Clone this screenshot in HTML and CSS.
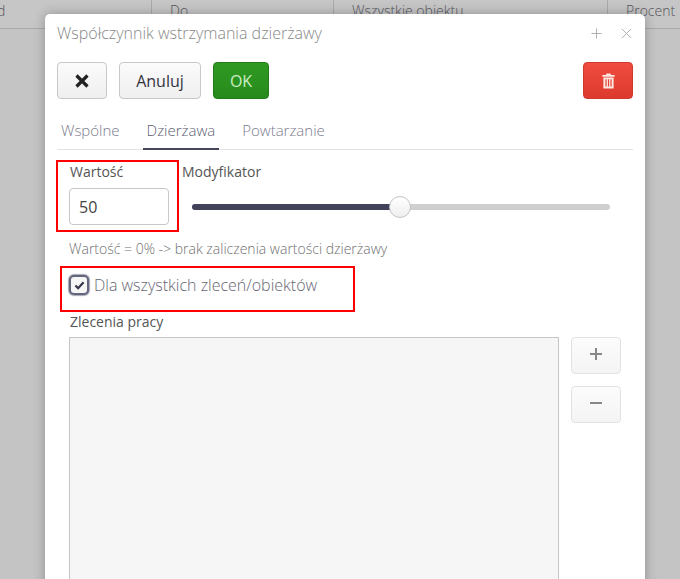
FILE: index.html
```html
<!DOCTYPE html>
<html lang="pl">
<head>
<meta charset="utf-8">
<title>Współczynnik wstrzymania dzierżawy</title>
<link rel="stylesheet" href="styles.css">
</head>
<body>
<div class="table-head">
  <div class="col col-a"><span>d</span></div>
  <div class="col col-b">Do</div>
  <div class="col col-c">Wszystkie obiektu</div>
  <div class="col col-d">Procent</div>
</div>
<section class="modal">
  <header class="modal-head">
    <h1 class="modal-title">Współczynnik wstrzymania dzierżawy</h1>
    <div class="win-icons">
      <svg class="win-icon" viewBox="0 0 12 12"><path d="M6 .5v11M.5 6h11"/></svg>
      <svg class="win-icon" viewBox="0 0 12 12"><path d="M1 1l10 10M11 1L1 11"/></svg>
    </div>
  </header>
  <div class="toolbar">
    <button class="btn btn-icon"><svg class="x-icon" viewBox="0 0 16 16"><path d="M2.5 2.5l11 11M13.5 2.5l-11 11"/></svg></button>
    <button class="btn btn-cancel">Anuluj</button>
    <button class="btn btn-ok">OK</button>
    <button class="btn btn-del">
      <svg class="trash" viewBox="0 0 14 16"><path d="M5 0h4l1 1.6h3.6v1.7H.4V1.600H4zM1.500 4.200h11V16h-11zM3.700 6v8h1.300V6zM6.400 6v8h1.300V6zM9.100 6v8h1.300V6z" fill-rule="evenodd"/></svg>
    </button>
  </div>
  <nav class="tabs">
    <a class="tab">Wspólne</a>
    <a class="tab tab-active">Dzierżawa</a>
    <a class="tab">Powtarzanie</a>
  </nav>
  <div class="value-row">
    <div class="value-col">
      <label class="field-label">Wartość</label>
      <input class="value-input" value="50">
    </div>
    <div class="mod-col">
      <label class="field-label mod-label">Modyfikator</label>
      <div class="slider"><div class="slider-fill"></div><div class="slider-thumb"></div></div>
    </div>
  </div>
  <p class="hint">Wartość = 0% -&gt; brak zaliczenia wartości dzierżawy</p>
  <div class="check-row">
    <span class="checkbox"><svg viewBox="0 0 12 10"><path d="M1.500 5l3 3 6-6.500"/></svg></span>
    <span class="check-label">Dla wszystkich zleceń/obiektów</span>
  </div>
  <label class="field-label orders-label">Zlecenia pracy</label>
  <div class="orders">
    <div class="list"></div>
    <div class="list-btns">
      <button class="btn btn-side"><svg viewBox="0 0 12 12"><path d="M6 0v12M0 6h12"/></svg></button>
      <button class="btn btn-side"><svg viewBox="0 0 12 12"><path d="M0 6h12"/></svg></button>
    </div>
  </div>
  <div class="mark mark-value"></div>
  <div class="mark mark-check"></div>
</section>
</body>
</html>
```
FILE: styles.css
```css
* { box-sizing: border-box; }
html, body { height: 100%; }
body {
  margin: 0;
  overflow: hidden;
  background: #c4c4c4;
  font-family: "Open Sans", sans-serif;
  color: #555;
  position: relative;
}
.table-head {
  display: flex;
  height: 29px;
  border-bottom: 1px solid #aaa;
  background: #c6c6c6;
  color: #55555e;
  font-size: 14px;
  font-weight: 300;
  line-height: 21px;
}
.col { border-right: 1px solid #aaa; padding-left: 18px; }
.col-a { width: 152px; padding: 0; }
.col-a span { display: block; margin-left: -3px; }
.col-b { width: 182px; }
.col-c { width: 274px; }
.col-d { flex: 1; border: 0; }
.modal {
  position: absolute;
  left: 45px;
  top: 14px;
  width: 600px;
  height: 700px;
  background: #fff;
  border-radius: 5px 5px 0 0;
  box-shadow: 0 0 12px rgba(0,0,0,.28);
  padding: 0 12px;
}
.modal-head {
  display: flex;
  justify-content: space-between;
  align-items: center;
  height: 38px;
}
.modal-title {
  margin: 0;
  font-size: 16px;
  font-weight: 300;
  color: #888;
  line-height: 38px;
}
.win-icons { display: flex; gap: 19px; padding-right: 1px; }
.win-icon { width: 11px; height: 11px; fill: none; stroke: #aaa; stroke-width: 1; }
.toolbar { display: flex; gap: 12px; height: 38px; margin-top: 10px; }
.btn {
  font-family: inherit;
  font-size: 16px;
  height: 37px;
  padding: 0;
  border: 1px solid #c8c8c8;
  border-radius: 4px;
  background: linear-gradient(#fbfbfb, #efefef);
  color: #33333e;
  display: flex;
  align-items: center;
  justify-content: center;
}
.btn-icon { width: 50px; }
.x-icon { width: 16px; height: 16px; fill: none; stroke: #222; stroke-width: 3.200; }
.btn-cancel { width: 82px; }
.btn-ok {
  width: 56px;
  background: linear-gradient(#2f9a22, #278a1c);
  border-color: #237a18;
  color: #cdeec4;
}
.btn-del {
  width: 50px;
  margin-left: auto;
  background: linear-gradient(#f04c40, #dd3a2e);
  border-color: #cf3a2e;
}
.trash { width: 13px; height: 16px; fill: #fde9e2; }
.tabs {
  display: flex;
  height: 39px;
  margin-top: 11px;
  border-bottom: 1px solid #e2e2e2;
}
.tab {
  padding: 0 4px;
  margin-right: 19px;
  font-size: 15px;
  font-weight: 300;
  line-height: 38px;
  height: 39px;
  color: #7a7a8c;
}
.tab-active {
  color: #5c5c72;
  border-bottom: 2px solid #45455c;
}
.value-row { display: flex; height: 90px; padding-top: 13px; }
.value-col { width: 125px; padding-left: 12px; }
.field-label {
  display: block;
  font-size: 14px;
  line-height: 18px;
  color: #555;
  padding-left: 1px;
}
.value-input {
  display: block;
  margin-top: 7px;
  width: 100px;
  height: 37px;
  border: 1px solid #c8c8c8;
  border-radius: 4px;
  padding: 0 9px;
  font: 16px "Open Sans", sans-serif;
  color: #444;
  outline: 0;
}
.mod-col { flex: 1; padding-right: 11px; }
.mod-label { padding-left: 0; }
.slider {
  position: relative;
  margin: 23px 12px 0 10px;
  height: 6px;
  border-radius: 3px;
  background: #cfcfcf;
}
.slider-fill {
  height: 6px;
  width: 50%;
  background: #42425a;
  border-radius: 3px 0 0 3px;
}
.slider-thumb {
  position: absolute;
  left: 197px;
  top: -8px;
  width: 22px;
  height: 22px;
  border-radius: 50%;
  border: 1px solid #c4c4c4;
  background: linear-gradient(#fff, #efefef);
}
.hint {
  margin: 0;
  padding-left: 12px;
  font-size: 14px;
  font-weight: 300;
  line-height: 18px;
  color: #707070;
}
.check-row {
  display: flex;
  align-items: center;
  gap: 5px;
  margin-top: 16px;
  padding-left: 12px;
  height: 22px;
}
.checkbox {
  width: 20px;
  height: 20px;
  border: 2px solid #65657e;
  border-radius: 5px;
  background: #f6f6f6;
  box-shadow: 0 0 1px 1px #a6a6b6;
  display: flex;
  align-items: center;
  justify-content: center;
}
.checkbox svg { width: 11px; height: 9px; fill: none; stroke: #33334a; stroke-width: 2.400; }
.check-label { font-size: 16px; font-weight: 300; color: #666672; }
.orders-label { margin-top: 17px; padding-left: 13px; }
.orders { display: flex; gap: 12px; padding-left: 12px; margin-top: 6px; }
.list {
  width: 490px;
  height: 400px;
  background: #f6f6f6;
  border: 1px solid #c6c6c6;
}
.list-btns { display: flex; flex-direction: column; gap: 12px; }
.btn-side {
  width: 50px;
  height: 37px;
  padding-bottom: 3px;
  border-color: #e2e2e2;
  background: linear-gradient(#fcfcfc, #f4f4f4);
}
.btn-side svg { width: 12px; height: 12px; fill: none; stroke: #888; stroke-width: 2; }
.mark { position: absolute; border: 2px solid #f00; }
.mark-value { left: 11px; top: 146px; width: 123px; height: 72px; }
.mark-check { left: 15px; top: 252px; width: 295px; height: 46px; }
```
